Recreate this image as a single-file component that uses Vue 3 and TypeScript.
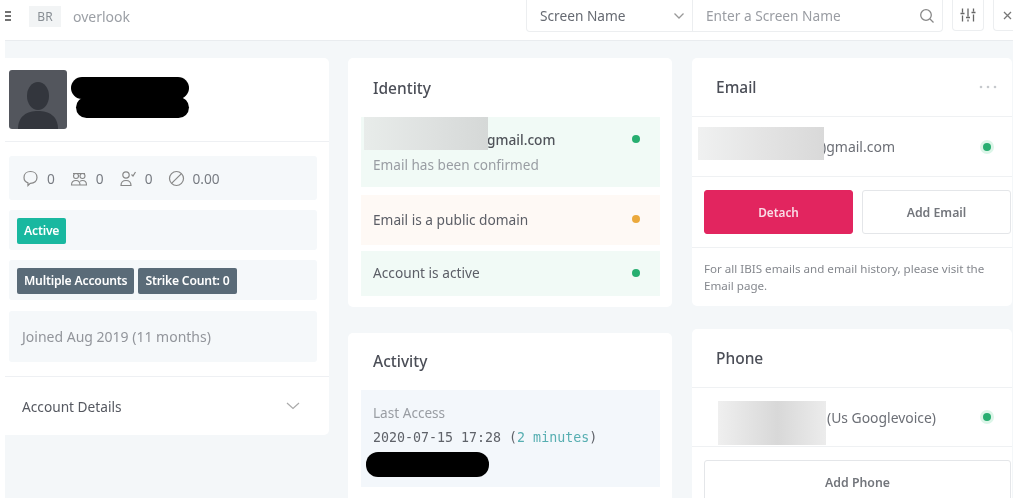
<template>
  <div class="page">
    <header class="topbar">
      <div class="brand">
        <svg class="menu" width="6" height="12" viewBox="0 0 6 12"><path d="M0 2h6M0 6h6M0 10h6" stroke="#444" stroke-width="1.6" /></svg>
        <span class="initials">BR</span>
        <span class="app-name">overlook</span>
      </div>
      <div class="tools">
        <div class="search">
          <div class="select">
            <span>Screen Name</span>
            <svg width="12" height="8" viewBox="0 0 12 8"><path d="M1.5 1.5 6 6l4.5-4.500" fill="none" stroke="#999" stroke-width="1.3" /></svg>
          </div>
          <div class="input">
            <span>Enter a Screen Name</span>
            <svg width="16" height="16" viewBox="0 0 16 16" fill="none" stroke="#888" stroke-width="1.3"><circle cx="7" cy="7" r="5.3" /><path d="m11 11 3.5 3.5" /></svg>
          </div>
        </div>
        <button class="tool-btn">
          <svg width="16" height="16" viewBox="0 0 16 16" fill="none" stroke="#666" stroke-width="1.3"><path d="M2.500 1.500v4M2.500 8.500v6M8 1.500v8M8 12.500v2M13.500 1.500v3M13.500 7.500v7M.5 6.500h4M6 10.500h4M11.500 5.500h4" /></svg>
        </button>
        <button class="tool-btn tool-btn-cut">
          <svg width="9" height="9" viewBox="0 0 9 9" fill="none" stroke="#777" stroke-width="1.3"><path d="m1 1 7 7M8 1 1 8" /></svg>
        </button>
      </div>
    </header>

    <main class="content">
      <section class="card profile">
        <div class="hero">
          <div class="avatar">
            <svg width="58" height="59" viewBox="0 0 58 59"><ellipse cx="29" cy="26" rx="11" ry="14" fill="#33363d" /><path d="M9 59c0-13 9-18 20-18s20 5 20 18z" fill="#33363d" /></svg>
          </div>
          <div class="scribble">
            <span class="ink ink-top"></span>
            <span class="ink ink-bottom"></span>
          </div>
        </div>
        <div class="blocks">
          <div class="block stats">
            <span class="stat" v-for="stat in stats" :key="stat.icon">
              <svg v-if="stat.icon === 'comment'" width="17" height="17" viewBox="0 0 17 17" fill="none" stroke="#888" stroke-width="1.2"><path d="M8.500 1.500c3.800 0 6.500 2.500 6.500 6s-2.700 5.800-6.500 5.800h-.3L6 15.500v-2.600C3.500 12 2 10 2 7.500c0-3.500 2.700-6 6.500-6z" /></svg>
              <svg v-else-if="stat.icon === 'group'" width="18" height="17" viewBox="0 0 18 17" fill="none" stroke="#888" stroke-width="1.100"><circle cx="6" cy="6" r="2.500" /><circle cx="12.500" cy="6" r="2.500" /><path d="M1.500 15c0-3 2-4.500 4.500-4.500s4 1.500 4 4.500zM10 15h6.500c0-3-1.800-4.500-4-4.500-1 0-1.800.2-2.500.8M3 3.500h12" /></svg>
              <svg v-else-if="stat.icon === 'follow'" width="18" height="17" viewBox="0 0 18 17" fill="none" stroke="#888" stroke-width="1.200"><circle cx="7" cy="5" r="3.200" /><path d="M2 15.500c0-3.500 2-5 5-5s5 1.500 5 5zM12.500 4.500 14 6l2.500-4" /></svg>
              <svg v-else width="17" height="17" viewBox="0 0 17 17" fill="none" stroke="#888" stroke-width="1.200"><circle cx="8.500" cy="8.500" r="7" /><path d="m3.800 13.200 9.400-9.400" /></svg>
              <span>{{ stat.value }}</span>
            </span>
          </div>
          <div class="block tags-block"><span class="tag tag-active">Active</span></div>
          <div class="block tags-block">
            <span class="tag">Multiple Accounts</span>
            <span class="tag">Strike Count: 0</span>
          </div>
          <div class="block joined">Joined Aug 2019 (11 months)</div>
        </div>
        <div class="details">
          <span>Account Details</span>
          <svg width="14" height="8" viewBox="0 0 14 8"><path d="M1 1l6 5.500L13 1" fill="none" stroke="#aaa" stroke-width="1.200" /></svg>
        </div>
      </section>

      <div class="column">
        <section class="card identity">
          <h2>Identity</h2>
          <div class="notice green tall">
            <div>
              <div class="notice-email"><span class="blur-box blur-identity"></span><strong>gmail.com</strong></div>
              <div class="muted">Email has been confirmed</div>
            </div>
            <i class="dot dot-green"></i>
          </div>
          <div class="notice orange mid"><span>Email is a public domain</span><i class="dot dot-orange"></i></div>
          <div class="notice green short"><span>Account is active</span><i class="dot dot-green"></i></div>
        </section>
        <section class="card activity">
          <h2>Activity</h2>
          <div class="access">
            <div class="muted">Last Access</div>
            <div class="stamp">2020-07-15 17:28 (<em>2 minutes</em>)</div>
            <span class="ink ink-access"></span>
          </div>
        </section>
      </div>

      <div class="column">
        <section class="card contact email-card">
          <div class="contact-head">
            <h2>Email</h2>
            <svg class="more" width="18" height="4" viewBox="0 0 18 4" fill="#c6c9cd"><circle cx="2" cy="2" r="1.300" /><circle cx="9" cy="2" r="1.300" /><circle cx="16" cy="2" r="1.300" /></svg>
          </div>
          <div class="contact-row email-row">
            <div class="value"><span class="value-text">)gmail.com</span><span class="blur-box blur-email"></span></div>
            <i class="dot dot-green halo"></i>
          </div>
          <div class="actions">
            <button class="btn btn-danger">Detach</button>
            <button class="btn">Add Email</button>
          </div>
          <p class="hint">For all IBIS emails and email history, please visit the Email page.</p>
        </section>
        <section class="card contact phone-card">
          <div class="contact-head"><h2>Phone</h2></div>
          <div class="contact-row phone-row">
            <div class="value"><span class="blur-box blur-phone"></span><span class="value-text">(Us Googlevoice)</span></div>
            <i class="dot dot-green halo"></i>
          </div>
          <div class="actions">
            <button class="btn btn-wide">Add Phone</button>
          </div>
        </section>
      </div>
    </main>
  </div>
</template>

<script setup lang="ts">
interface Stat {
  icon: string;
  value: string;
}

const stats: Stat[] = [
  { icon: 'comment', value: '0' },
  { icon: 'group', value: '0' },
  { icon: 'follow', value: '0' },
  { icon: 'strike', value: '0.00' },
];
</script>

<style>
html,
body {
  margin: 0;
  background: #fff;
}
</style>

<style scoped>
.page {
  width: 1024px;
  height: 503px;
  overflow: hidden;
  background: #fff;
  font-family: "Noto Sans", "Open Sans", sans-serif;
  font-size: 13.7px;
  color: #5a5d66;
  filter: blur(0.4px);
}

.topbar {
  height: 40px;
  margin: 0 11px 0 5px;
  display: flex;
  justify-content: space-between;
  align-items: flex-start;
  border-bottom: 1px solid #e9ecef;
}

.brand {
  display: flex;
  align-items: center;
  height: 32px;
}

.menu {
  margin-right: 18px;
}

.initials {
  width: 32px;
  height: 21px;
  line-height: 21px;
  text-align: center;
  font-size: 12px;
  background: #f2f4f5;
  color: #888e94;
}

.app-name {
  margin-left: 12px;
  color: #9b9fa5;
  font-size: 14px;
}

.tools {
  display: flex;
  gap: 9px;
}

.search {
  display: flex;
  height: 31px;
  border: 1px solid #eceef0;
  border-top: 0;
  border-radius: 0 0 4px 4px;
}

.select {
  width: 166px;
  padding: 0 7px 0 13px;
  box-sizing: border-box;
  display: flex;
  align-items: center;
  justify-content: space-between;
  border-right: 1px solid #eceef0;
  color: #666a72;
}

.input {
  width: 249px;
  padding: 0 7px 0 13px;
  box-sizing: border-box;
  display: flex;
  align-items: center;
  justify-content: space-between;
  color: #9a9da3;
}

.tool-btn {
  width: 32px;
  height: 31px;
  padding: 0;
  display: flex;
  align-items: center;
  justify-content: center;
  background: #fff;
  border: 1px solid #eceef0;
  border-top: 0;
  border-radius: 0 0 4px 4px;
}

.tool-btn-cut {
  width: 20px;
  border-right: 0;
  justify-content: flex-start;
  padding-left: 9px;
  border-radius: 0 0 0 4px;
}

.content {
  height: 457px;
  margin: 0 11px 0 5px;
  padding-top: 17px;
  box-sizing: border-box;
  overflow: hidden;
  background: #f4f7f9;
  display: grid;
  grid-template-columns: 324px 324px 321px;
  column-gap: 19px;
  align-items: start;
}

.column {
  display: flex;
  flex-direction: column;
  gap: 26px;
}

.column:last-child {
  margin-left: 1px;
  gap: 23px;
}

.card {
  background: #fff;
  border-radius: 5px;
}

h2 {
  margin: 0;
  font-size: 15.5px;
  font-weight: 500;
  color: #4b4e57;
}

.profile {
  height: 377px;
  border-radius: 0 5px 5px 0;
}

.hero {
  height: 84px;
  padding: 12px 0 0 4px;
  box-sizing: border-box;
  display: flex;
  border-bottom: 1px solid #eef0f3;
}

.avatar {
  width: 58px;
  height: 59px;
  border-radius: 3px;
  overflow: hidden;
  background: #53565d;
}

.scribble {
  position: relative;
  margin-left: 4px;
}

.ink {
  display: block;
  background: #000;
  border-radius: 12px;
}

.ink-top {
  width: 118px;
  height: 22px;
  margin-top: 7px;
}

.ink-bottom {
  width: 113px;
  height: 21px;
  margin: -2px 0 0 5px;
}

.blocks {
  padding: 14px 12px 0 4px;
  display: flex;
  flex-direction: column;
  gap: 10px;
}

.block {
  background: #f5f8fa;
  border-radius: 3px;
  box-sizing: border-box;
  display: flex;
  align-items: center;
}

.stats {
  height: 44px;
  padding: 0 0 0 13px;
  gap: 15px;
  color: #777b82;
}

.stat {
  display: flex;
  align-items: center;
  gap: 8px;
}

.tags-block {
  height: 40px;
  padding: 2px 0 0 8px;
  gap: 4px;
}

.tag {
  height: 26px;
  line-height: 26px;
  padding: 0 7px;
  border-radius: 2px;
  background: #5a6b78;
  color: #fff;
  font-size: 12.2px;
  font-weight: 600;
  letter-spacing: -0.2px;
}

.tag-active {
  background: #19b8a0;
}

.joined {
  height: 51px;
  margin-top: 1px;
  padding-left: 13px;
  color: #92959b;
  font-size: 14px;
}

.details {
  margin-top: 14px;
  height: 58px;
  padding: 0 29px 0 17px;
  display: flex;
  align-items: center;
  justify-content: space-between;
  border-top: 1px solid #eef0f3;
  color: #555860;
}

.identity {
  height: 249px;
  padding: 19px 12px 0 13px;
  box-sizing: border-box;
}

.identity h2 {
  margin: 0 0 18px 12px;
  line-height: 22px;
}

.notice {
  display: flex;
  align-items: center;
  justify-content: space-between;
  padding: 0 20px 0 12px;
  margin-bottom: 6px;
  color: #5b5e66;
}

.green {
  background: #f1faf6;
}

.orange {
  background: #fef9f5;
}

.tall {
  height: 70px;
  margin-bottom: 8px;
}

.mid {
  height: 50px;
  padding-bottom: 2px;
  box-sizing: border-box;
}

.short {
  height: 45px;
  padding-bottom: 2px;
  box-sizing: border-box;
}

.notice-email {
  position: relative;
}

.notice-email strong {
  font-weight: 500;
  color: #50535a;
  margin-left: 114px;
}

.dot {
  width: 8px;
  height: 8px;
  border-radius: 50%;
  flex: none;
}

.dot-green {
  background: #27ae70;
}

.dot-orange {
  background: #eba93c;
}

.halo {
  box-shadow: 0 0 0 3px #dcf5e8;
}

.tall .dot {
  margin-top: -26px;
}

.muted {
  color: #999da3;
  font-size: 13.6px;
}

.tall .muted {
  margin-top: 6px;
}

.blur-box {
  position: absolute;
  display: block;
}

.blur-identity {
  left: -9px;
  top: -13px;
  width: 124px;
  height: 33px;
  background: linear-gradient(90deg, #e8ecea, #dde0df 60%, #d5d8d7);
}

.activity {
  height: 170px;
  padding: 17px 12px 0 13px;
  box-sizing: border-box;
}

.activity h2 {
  margin: 0 0 18px 12px;
  line-height: 22px;
}

.access {
  position: relative;
  height: 97px;
  padding: 13px 12px 0;
  background: #f3f7fb;
  box-sizing: border-box;
}

.stamp {
  margin-top: 8px;
  font-family: "DejaVu Sans Mono", "Liberation Mono", monospace;
  font-size: 13.3px;
  color: #5f6269;
}

.stamp em {
  font-style: normal;
  color: #56aeb1;
}

.ink-access {
  position: absolute;
  left: 5px;
  top: 62px;
  width: 123px;
  height: 25px;
}

.contact-head {
  display: flex;
  align-items: center;
  justify-content: space-between;
  height: 58px;
  padding: 0 15px 0 24px;
  border-bottom: 1px solid #eff1f3;
}

.email-card {
  height: 248px;
}

.contact-row {
  display: flex;
  align-items: center;
  justify-content: space-between;
  padding: 0 21px 0 0;
  border-bottom: 1px solid #eff1f3;
  box-sizing: border-box;
}

.email-row {
  height: 60px;
}

.phone-row {
  height: 59px;
}

.value {
  position: relative;
  display: flex;
  align-items: center;
  height: 100%;
  color: #6c6f76;
}

.email-row .value-text {
  margin-left: 130px;
  font-size: 14px;
}

.phone-row .value-text {
  margin-left: 135px;
  font-size: 13.9px;
}

.blur-email {
  left: 6px;
  top: 10px;
  width: 126px;
  height: 33px;
  background: linear-gradient(90deg, #f0f1f1, #e4e4e4 50%, #d9d9d9);
}

.blur-phone {
  left: 26px;
  top: 13px;
  width: 108px;
  height: 44px;
  background: linear-gradient(90deg, #efefef, #d8d8d8 55%, #ececec);
}

.actions {
  display: flex;
  gap: 9px;
  padding: 13px 1px 13px 12px;
}

.btn {
  flex: 1;
  height: 44px;
  padding: 0;
  border: 1px solid #e4e6e9;
  border-radius: 3px;
  background: #fff;
  color: #73767c;
  font-family: inherit;
  font-size: 12.3px;
  font-weight: 600;
}

.btn-danger {
  background: #e2255f;
  border-color: #e2255f;
  color: #f9dbe5;
  font-size: 11.8px;
}

.email-card .actions {
  border-bottom: 1px solid #eff1f3;
}

.hint {
  margin: 12px 16px 0 12px;
  color: #85888e;
  font-size: 11.6px;
  line-height: 17px;
}

.phone-card {
  height: 190px;
}
</style>
